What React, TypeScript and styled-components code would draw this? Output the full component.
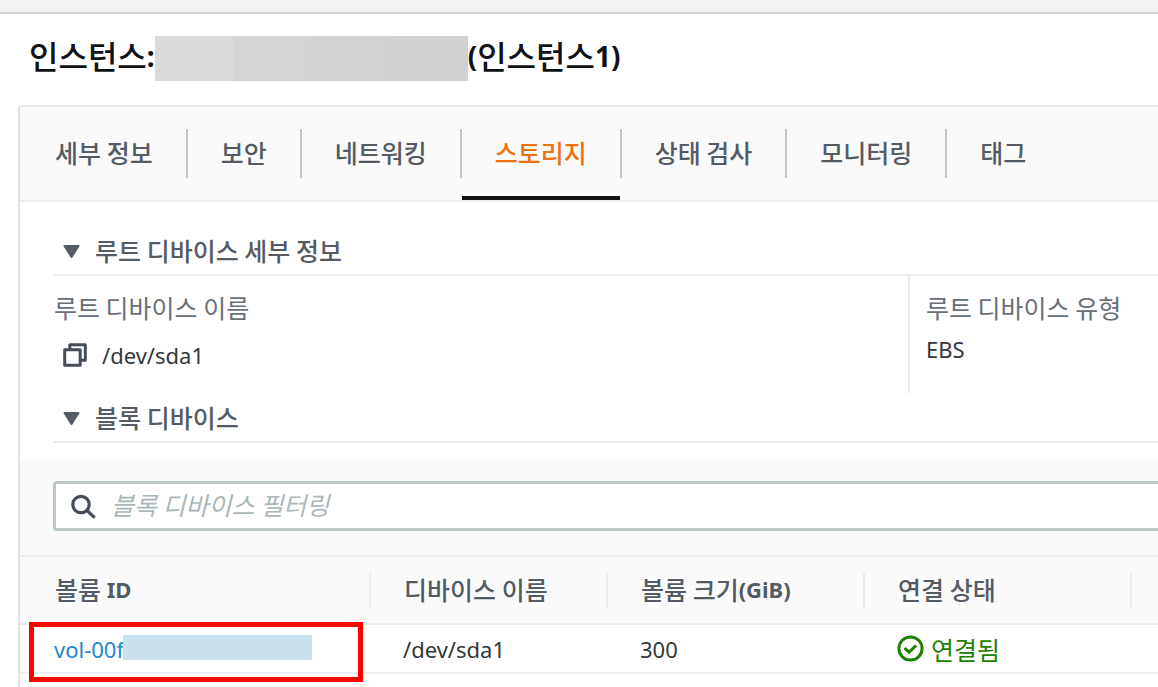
import React from "react";
import styled, { createGlobalStyle } from "styled-components";

const color = {
  ink: "#0f1114",
  value: "#33373c",
  heading: "#545b64",
  icon: "#454d59",
  label: "#687078",
  line: "#eaeded",
  control: "#bcc8c8",
  surface: "#fafafa",
  orange: "#ec7211",
  link: "#2188c9",
  success: "#1d8102",
};

const GlobalStyle = createGlobalStyle`
  * { box-sizing: border-box; }
  body {
    margin: 0;
    background: #fff;
    color: ${color.value};
    font-family: "Noto Sans CJK KR", sans-serif;
    font-size: 25px;
    overflow-x: hidden;
  }
`;

const Page = styled.div`
  min-height: 100vh;
  display: flex;
  flex-direction: column;
`;

const TopStrip = styled.div`
  height: 14px;
  background: #f2f3f3;
  border-bottom: 2px solid #d5d9d9;
`;

const TitleBar = styled.header`
  padding: 22px 29px 24px;
`;

const Title = styled.h1`
  margin: 0;
  display: flex;
  align-items: flex-start;
  font-size: 32px;
  line-height: 38px;
  font-weight: 500;
  color: ${color.ink};
  white-space: nowrap;
`;

const Latin = styled.span<{ $large?: boolean }>`
  font-family: "Noto Sans", sans-serif;
  font-size: ${(p) => (p.$large ? 28 : 22)}px;
  font-weight: ${(p) => (p.$large ? 700 : "inherit")};
  line-height: 1;
  vertical-align: 2px;
`;

const TitleMask = styled.span`
  flex: none;
  width: 313px;
  height: 45px;
  background: linear-gradient(
    90deg,
    #dadada 25%,
    #d4d4d4 25% 50%,
    #d1d2d3 50% 75%,
    #d0d1d0 75%
  );
`;

const Panel = styled.main`
  flex: 1;
  margin-left: 18px;
  border-left: 2px solid #dee2e2;
  border-top: 2px solid ${color.line};
  border-top-left-radius: 3px;
`;

const Tabs = styled.nav`
  display: flex;
  height: 95px;
  padding-left: 2px;
  background: ${color.surface};
  border-bottom: 2px solid ${color.line};
`;

const Tab = styled.button<{ $active?: boolean }>`
  height: 93px;
  padding: 0 33px;
  border: 0;
  background: none;
  font: inherit;
  font-weight: 500;
  white-space: nowrap;
  color: ${(p) => (p.$active ? color.orange : color.heading)};
  border-bottom: 4px solid ${(p) => (p.$active ? color.ink : "transparent")};
`;

const TabDivider = styled.span`
  flex: none;
  width: 2px;
  height: 49px;
  margin-top: 22px;
  background: ${color.control};
`;

const Section = styled.section`
  padding: 24px 0 0 34px;
`;

const SectionToggle = styled.button`
  display: flex;
  align-items: center;
  gap: 15px;
  width: 100%;
  height: 50px;
  padding: 0 0 0 9px;
  border: 0;
  border-bottom: 2px solid ${color.line};
  background: none;
  font: inherit;
  font-weight: 500;
  color: ${color.heading};
  text-align: left;
`;

const Details = styled.dl`
  display: grid;
  grid-template-columns: minmax(0, 854fr) minmax(250px, 250fr);
  height: 117px;
  margin: 0;
`;

const Detail = styled.div<{ $divided?: boolean }>`
  padding: ${(p) => (p.$divided ? "13px 0 0 16px" : "13px 0 0 0")};
  border-left: ${(p) => (p.$divided ? `2px solid ${color.line}` : "0")};
  white-space: nowrap;
`;

const Term = styled.dt`
  line-height: 36px;
  color: ${color.label};
`;

const Value = styled.dd<{ $copyable?: boolean }>`
  display: flex;
  align-items: center;
  gap: 15px;
  height: ${(p) => (p.$copyable ? 60 : 48)}px;
  margin: 0;
  padding-left: ${(p) => (p.$copyable ? 9 : 0)}px;
`;

const CopyButton = styled.button`
  display: flex;
  padding: 0;
  border: 0;
  background: none;
  color: ${color.icon};
`;

const FilterBar = styled.div`
  margin-top: 16px;
  padding: 22px 0 24px 33px;
  background: ${color.surface};
`;

const SearchField = styled.label`
  display: flex;
  align-items: center;
  gap: 15px;
  height: 50px;
  padding-left: 15px;
  border: 3px solid ${color.control};
  border-right: 0;
  border-radius: 4px 0 0 4px;
  background: #fff;
  color: ${color.icon};
`;

const SearchInput = styled.input`
  flex: 1;
  min-width: 0;
  height: 44px;
  padding: 0 0 4px;
  border: 0;
  outline: 0;
  background: none;
  font: inherit;
  color: ${color.ink};
  &::placeholder {
    color: #aab7b8;
    font-style: italic;
    opacity: 1;
  }
`;

const Table = styled.table`
  width: 100%;
  table-layout: fixed;
  border-collapse: separate;
  border-spacing: 0;
`;

const Col = styled.col<{ $width?: number }>`
  width: ${(p) => (p.$width ? `${p.$width}px` : "auto")};
`;

const HeadCell = styled.th`
  height: 70px;
  padding: 0 0 0 33px;
  background: ${color.surface};
  border-top: 2px solid ${color.line};
  border-bottom: 2px solid ${color.line};
  font-weight: 500;
  color: ${color.heading};
  text-align: left;
  white-space: nowrap;
  &:first-child {
    padding-left: 35px;
  }
  ${Latin} {
    font-weight: 700;
  }
`;

const HeadLabel = styled.div`
  height: 35px;
  line-height: 33px;
  border-right: 2px solid ${color.line};
`;

const Cell = styled.td`
  position: relative;
  height: 49px;
  padding: 0 0 0 32px;
  border-bottom: 2px solid ${color.line};
  line-height: 36px;
  white-space: nowrap;
  &:first-child {
    padding-left: 34px;
  }
`;

const VolumeLink = styled.a`
  display: flex;
  align-items: center;
  color: ${color.link};
  text-decoration: none;
`;

const VolumeText = styled.span`
  width: 69px;
  overflow: hidden;
`;

const VolumeMask = styled.span`
  width: 189px;
  height: 25px;
  margin-bottom: 3px;
  background: #cae1f0;
`;

const Highlight = styled.span`
  position: absolute;
  inset: -3px 8px -10px 9px;
  border: 5px solid #fe0000;
  pointer-events: none;
`;

const Status = styled.span`
  display: flex;
  align-items: center;
  gap: 7px;
  color: ${color.success};
`;

const tabs = ["세부 정보", "보안", "네트워킹", "스토리지", "상태 검사", "모니터링", "태그"];

const Caret = () => (
  <svg width="17" height="18" viewBox="0 0 17 18" aria-hidden="true">
    <path
      d="M1.5 5h14L8.5 16z"
      fill="currentColor"
      stroke="currentColor"
      strokeWidth="2"
      strokeLinejoin="round"
    />
  </svg>
);

const CopyIcon = () => (
  <svg width="24" height="24" viewBox="0 0 24 24" fill="none" stroke="currentColor" strokeWidth="3" strokeLinejoin="round" aria-hidden="true">
    <path d="M1.7 6.8h15.5v15.5H1.7z" />
    <path d="M6.8 6.8V1.7h15.5v15.5h-5.1" />
  </svg>
);

const SearchIcon = () => (
  <svg width="25" height="25" viewBox="0 0 25 25" fill="none" stroke="currentColor" strokeWidth="3.2" aria-hidden="true">
    <circle cx="10" cy="10.5" r="8.2" />
    <path d="M16 16.5l7.7 7.2" />
  </svg>
);

const CheckIcon = () => (
  <svg width="27" height="27" viewBox="0 0 27 27" fill="none" stroke="currentColor" strokeWidth="3" aria-hidden="true">
    <circle cx="13.5" cy="13.5" r="11.6" />
    <path d="M7.5 13l4.6 4.2 7-6.7" />
  </svg>
);

export default function App() {
  return (
    <>
      <GlobalStyle />
      <Page>
        <TopStrip />
        <TitleBar>
          <Title>
            <span>
              인스턴스<Latin $large>:</Latin>
            </span>
            <TitleMask />
            <span>
              <Latin $large>(</Latin>인스턴스<Latin $large>1)</Latin>
            </span>
          </Title>
        </TitleBar>
        <Panel>
          <Tabs>
            {tabs.map((name, i) => (
              <React.Fragment key={name}>
                {i > 0 && <TabDivider />}
                <Tab type="button" $active={name === "스토리지"}>
                  {name}
                </Tab>
              </React.Fragment>
            ))}
          </Tabs>

          <Section>
            <SectionToggle type="button" aria-expanded="true">
              <Caret />
              루트 디바이스 세부 정보
            </SectionToggle>
            <Details>
              <Detail>
                <Term>루트 디바이스 이름</Term>
                <Value $copyable>
                  <CopyButton type="button" aria-label="복사">
                    <CopyIcon />
                  </CopyButton>
                  <Latin>/dev/sda1</Latin>
                </Value>
              </Detail>
              <Detail $divided>
                <Term>루트 디바이스 유형</Term>
                <Value>
                  <Latin>EBS</Latin>
                </Value>
              </Detail>
            </Details>
            <SectionToggle type="button" aria-expanded="true">
              <Caret />
              블록 디바이스
            </SectionToggle>
          </Section>

          <FilterBar>
            <SearchField>
              <SearchIcon />
              <SearchInput type="text" placeholder="블록 디바이스 필터링" aria-label="블록 디바이스 필터링" />
            </SearchField>
          </FilterBar>

          <Table>
            <colgroup>
              <Col $width={351} />
              <Col $width={237} />
              <Col $width={257} />
              <Col $width={267} />
              <Col />
            </colgroup>
            <thead>
              <tr>
                <HeadCell>
                  <HeadLabel>
                    볼륨 <Latin>ID</Latin>
                  </HeadLabel>
                </HeadCell>
                <HeadCell>
                  <HeadLabel>디바이스 이름</HeadLabel>
                </HeadCell>
                <HeadCell>
                  <HeadLabel>
                    볼륨 크기<Latin>(GiB)</Latin>
                  </HeadLabel>
                </HeadCell>
                <HeadCell>
                  <HeadLabel>연결 상태</HeadLabel>
                </HeadCell>
                <HeadCell />
              </tr>
            </thead>
            <tbody>
              <tr>
                <Cell>
                  <VolumeLink href="#volume">
                    <VolumeText>
                      <Latin>vol-00f</Latin>
                    </VolumeText>
                    <VolumeMask />
                  </VolumeLink>
                  <Highlight />
                </Cell>
                <Cell>
                  <Latin>/dev/sda1</Latin>
                </Cell>
                <Cell>
                  <Latin>300</Latin>
                </Cell>
                <Cell>
                  <Status>
                    <CheckIcon />
                    연결됨
                  </Status>
                </Cell>
                <Cell />
              </tr>
            </tbody>
          </Table>
        </Panel>
      </Page>
    </>
  );
}
